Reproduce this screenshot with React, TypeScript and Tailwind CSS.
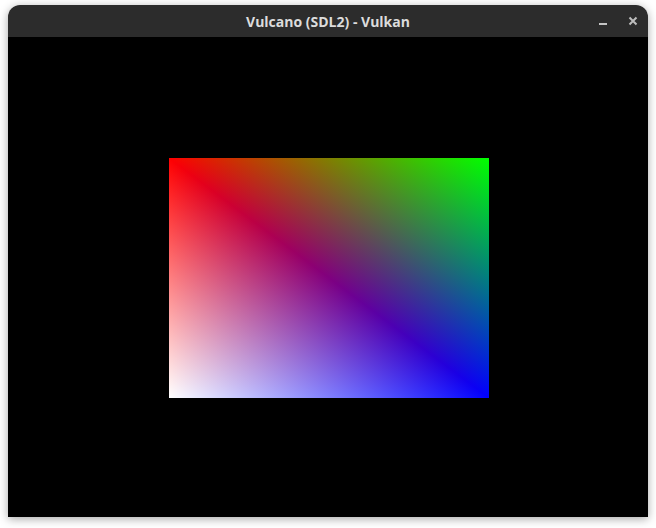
import React from 'react';

const GradientQuad: React.FC = () => (
  <svg width={320} height={240} viewBox="0 0 320 240" className="block">
    <defs>
      <linearGradient id="redG" gradientUnits="userSpaceOnUse" x1={0} y1={0} x2={320} y2={0}>
        <stop offset="0" stopColor="#ff0000" />
        <stop offset="1" stopColor="#000000" />
      </linearGradient>
      <linearGradient id="blueG" gradientUnits="userSpaceOnUse" x1={0} y1={240} x2={0} y2={0}>
        <stop offset="0" stopColor="#0000ff" />
        <stop offset="1" stopColor="#000000" />
      </linearGradient>
      {/* green peaks at both off-diagonal corners, zero along the diagonal */}
      <linearGradient
        id="greenG"
        gradientUnits="userSpaceOnUse"
        x1={320}
        y1={0}
        x2={204.8}
        y2={153.6}
        spreadMethod="reflect"
      >
        <stop offset="0" stopColor="#00ff00" />
        <stop offset="1" stopColor="#000000" />
      </linearGradient>
    </defs>
    <g className="isolate">
      <rect width={320} height={240} fill="#000" />
      <rect width={320} height={240} fill="url(#redG)" className="mix-blend-screen" />
      <rect width={320} height={240} fill="url(#greenG)" className="mix-blend-screen" />
      <rect width={320} height={240} fill="url(#blueG)" className="mix-blend-screen" />
    </g>
  </svg>
);

const TitleBar: React.FC = () => (
  <div className="relative flex h-[32px] items-center justify-center rounded-t-[12px] bg-[#2c2c2c]">
    <span className="font-['Open_Sans','DejaVu_Sans',sans-serif] text-[14px] font-bold text-[#dcdcdc]">
      Vulcano (SDL2) - Vulkan
    </span>
    <div className="absolute right-[10px] top-0 flex h-full items-center gap-[20px]">
      <svg width={10} height={10} viewBox="0 0 10 10">
        <rect x={1} y={7} width={8} height={2} fill="#c4c4c4" />
      </svg>
      <svg width={10} height={10} viewBox="0 0 10 10">
        <path d="M1.5 1.5 L8.5 8.5 M8.5 1.5 L1.5 8.5" stroke="#bdbdbd" strokeWidth={2} />
      </svg>
    </div>
  </div>
);

export default function App() {
  return (
    <div className="h-[528px] w-[656px] bg-white pl-[8px] pt-[5px]">
      <div className="w-[640px] rounded-t-[12px] shadow-[0_2px_10px_rgba(0,0,0,0.35)]">
        <TitleBar />
        <div className="h-[480px] bg-black pl-[161px] pt-[121px]">
          <GradientQuad />
        </div>
      </div>
    </div>
  );
}
